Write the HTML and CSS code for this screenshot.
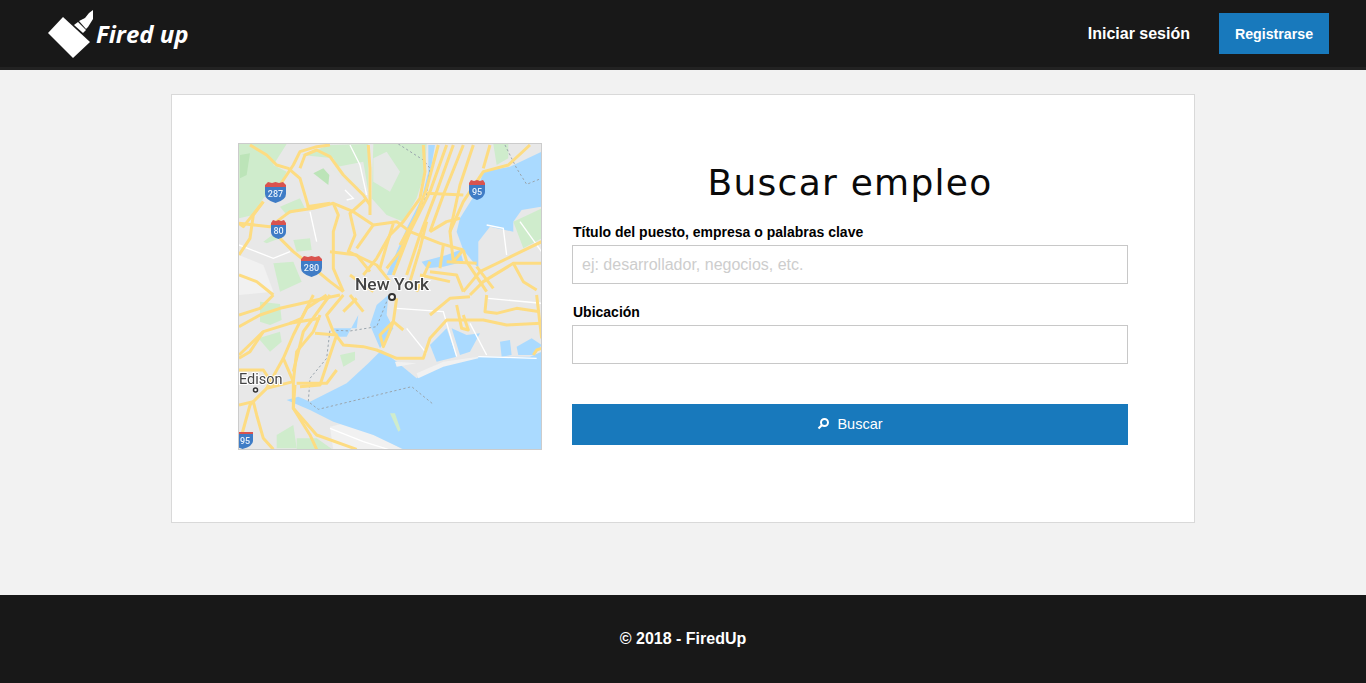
FILE: index.html
```html
<!DOCTYPE html>
<html lang="es">
<head>
  <meta charset="UTF-8" />
  <meta name="viewport" content="width=device-width, initial-scale=1.0" />
  <title>Fired up</title>
  <link rel="stylesheet" href="styles.css">
</head>
<body>

  <header class="topbar">
    <a class="logo" href="#">
      <svg class="logo-icon" width="50" height="50" viewBox="47 9 50 50">
        <polygon points="48,33 63,17 90,42 73,58" fill="#fff"/>
        <polygon points="74,25 78,22 86,30 83,33" fill="#fff"/>
        <polygon points="79,21 85,18 89,13 93,10 93,19 88,27 86,29" fill="#fff"/>
      </svg>
      <span class="logo-text">Fired up</span>
    </a>
    <nav class="topnav">
      <a class="login" href="#">Iniciar sesión</a>
      <a class="signup" href="#">Registrarse</a>
    </nav>
  </header>

  <main class="content">
    <section class="card">

      <!-- Map drawn in 3x coordinates -->
      <div class="map">
        <svg width="302" height="305" viewBox="0 0 302 305">
          <rect class="land" width="302" height="305"/>

          <g transform="translate(-9 -9) scale(0.3333)">
            <!-- top half -->
            <polygon class="green" points="27,27 170,27 130,90 170,110 150,150 100,190 70,240 27,250"/>
            <polygon class="green2" points="30,60 60,55 50,120 30,130"/>
            <polygon class="green" points="215,60 300,30 415,27 415,170 350,140 310,70"/>
            <polygon class="lightgrey" points="300,100 400,80 415,170 350,140"/>
            <polygon class="green" points="430,27 590,27 585,110 560,190 520,260 470,240 425,190"/>
            <polygon class="lightgrey" points="430,70 470,50 510,110 480,170 430,140"/>
            <polygon class="green" points="150,215 210,190 225,220 170,240"/>
            <polygon class="green" points="100,320 140,290 150,310 110,325"/>
            <polygon class="green" points="190,315 240,310 245,345 200,350"/>
            <polygon class="green2" points="250,115 280,100 298,120 295,150"/>
            <polygon class="green" points="790,27 835,27 835,70 800,90"/>
            <polygon class="green" points="850,260 935,220 935,310 880,340"/>
            <polygon class="green" points="130,385 190,380 215,440 150,470"/>
            <polygon class="lightland" points="27,360 100,390 130,470 27,480"/>
            <polygon class="water" points="840,95 935,50 935,215 875,225 850,260 850,290 780,275 745,320 745,400 700,345 680,290 690,250 740,170 760,110"/>
            <polygon class="water" points="595,30 615,30 595,150 545,280 485,420 470,420 530,280 575,190 595,110"/>
            <polygon class="water" points="575,380 650,360 690,345 700,380 640,395 590,400"/>
            <g class="minor">
              <polyline points="345,165 370,190 350,195"/>
              <polyline points="360,30 390,90 410,180"/>
              <polyline points="27,330 130,370 180,350"/>
              <polyline points="240,230 260,320"/>
              <polyline points="770,270 820,280 830,360"/>
              <polyline points="870,260 935,350"/>
            </g>
            <polyline class="border" points="505,27 580,75 600,100 590,180 545,280"/>
            <polyline class="border" points="825,30 860,100 890,148 935,130"/>
            <g class="road">
              <polyline points="60,30 110,60 140,90 175,100 210,130 235,215"/>
              <polyline points="150,150 190,90 210,50 260,35 300,30"/>
              <polyline points="210,100 225,60 260,45 300,65 340,120 400,180 420,210"/>
              <polyline points="415,30 420,100 420,240"/>
              <polyline points="27,265 120,275 180,230 250,220 310,205 370,230 430,270 500,260 540,290 630,325 700,345"/>
              <polyline points="100,200 70,240 60,310 27,360"/>
              <polyline points="310,205 325,240 310,290 310,400 340,470"/>
              <polyline points="410,190 360,235 375,300 355,350 440,390 480,440"/>
              <polyline points="150,310 190,350 240,390 300,440 340,470"/>
              <polyline points="580,30 585,110 570,190 520,260 480,300 440,370 400,420"/>
              <polyline points="650,30 600,170 540,290 490,420"/>
              <polyline points="625,30 590,160 560,240 510,330"/>
              <polyline points="670,30 620,170 570,300 530,420"/>
              <polyline points="700,30 640,180 600,290"/>
              <polyline points="730,30 690,150 660,290 670,380 700,345"/>
              <polyline points="900,30 835,90 760,110 700,200 660,290"/>
              <polyline points="780,30 760,100"/>
              <polyline points="590,175 700,180"/>
              <polyline points="935,320 750,410 700,470"/>
              <polyline points="935,385 850,385 760,440 720,480"/>
              <polyline points="700,345 710,380 770,470"/>
              <polyline points="650,380 740,385"/>
              <polyline points="600,410 680,420 700,470"/>
              <polyline points="850,385 880,440 920,465"/>
              <polyline points="430,270 380,340"/>
              <polyline points="490,265 470,330 450,400"/>
              <polyline points="590,260 570,340 540,440"/>
              <polyline points="27,265 40,275 100,200"/>
              <polyline points="600,380 560,470"/>
              <polyline points="640,330 630,400"/>
              <polyline points="360,420 430,470"/>
              <polyline points="300,350 380,360 420,410"/>
              <polyline points="27,420 80,440 130,480"/>
              <polyline points="570,420 660,440"/>
              <polyline points="740,395 790,460"/>
              <polyline points="600,290 650,260 690,250"/>
              <polyline points="540,290 510,350 470,400"/>
              <polyline points="230,215 300,205"/>
            </g>
          </g>

          <g transform="translate(-9 151) scale(0.3333)">
            <!-- bottom half -->
            <polygon class="green" points="90,20 150,27 155,75 120,90 90,80"/>
            <polygon class="green" points="85,130 150,110 155,140 120,170"/>
            <polygon class="green" points="330,180 375,170 375,195 340,215"/>
            <polygon class="green" points="140,420 190,390 200,460 140,460"/>
            <polygon class="green" points="200,430 260,430 310,465 200,465"/>
            <polygon class="lightland" points="300,395 360,380 460,430 520,465 310,465"/>
            <polygon class="water" points="455,165 415,205 350,265 240,320 205,305 170,315 240,345 310,380 430,420 520,463 935,463 935,170 900,185 750,185 620,210 560,250 500,200"/>
            <polygon class="water" points="420,90 440,30 475,0 470,60 490,100 450,160"/>
            <polygon class="water" points="310,100 380,100 385,60 350,125 325,125"/>
            <polygon class="water" points="600,150 650,100 680,185 620,200"/>
            <polygon class="water" points="665,100 710,120 750,115 720,170 690,180"/>
            <polygon class="water" points="810,140 840,135 845,180 815,185"/>
            <polygon class="water" points="860,155 905,130 935,150 915,180 865,180"/>
            <polygon class="lightland" points="560,235 640,200 745,185 745,190 640,215 565,250"/>
            <polygon class="lightland" points="495,200 560,205 500,215"/>
            <polygon class="green" points="480,355 495,355 512,405 505,410"/>
            <g class="minor">
              <polyline points="500,40 640,50 680,185"/>
              <polyline points="530,100 590,175"/>
              <polyline points="720,85 770,180"/>
              <polyline points="745,185 920,190"/>
              <polyline points="775,10 935,25"/>
              <polyline points="300,400 400,440 480,465"/>
            </g>
            <polyline class="border" points="470,20 440,95 360,108 300,105 290,190 240,250 235,320 265,343 545,275 610,328"/>
            <g class="road">
              <polyline points="27,95 90,60 150,40 260,15 330,0"/>
              <polyline points="27,180 100,110 180,85 270,70"/>
              <polyline points="290,0 230,40 190,120 160,190 190,260 190,340 260,420 380,463"/>
              <polyline points="340,0 290,60 310,110 340,150 400,155 440,165 500,190 580,190 600,130 650,75 760,75 830,90 935,85"/>
              <polyline points="255,115 320,120 270,270 210,275"/>
              <polyline points="270,60 250,110 200,170 190,260 110,280 60,330 27,450"/>
              <polyline points="300,0 220,110 190,230"/>
              <polyline points="320,225 290,265 200,265"/>
              <polyline points="27,225 100,225 130,270"/>
              <polyline points="27,330 70,320 80,360 100,430 130,463"/>
              <polyline points="195,270 190,340 240,420 260,463"/>
              <polyline points="500,10 490,80 450,120 460,155 475,120 490,80 520,105"/>
              <polyline points="600,60 660,10 720,5"/>
              <polyline points="680,30 695,100 715,105 700,60"/>
              <polyline points="770,0 765,50 800,55 860,40 930,50"/>
              <polyline points="920,0 935,130"/>
              <polyline points="360,0 400,50"/>
              <polyline points="910,180 920,165 935,160"/>
              <polyline points="250,0 215,70 180,85"/>
              <polyline points="130,0 90,40 27,60"/>
              <polyline points="380,10 340,50"/>
              <polyline points="100,110 60,170 27,190"/>
              <polyline points="160,190 110,280"/>
            </g>
          </g>

          <!-- shields -->
          <g class="shield" transform="translate(26 38)">
            <path class="shield-top" d="M0 3L3 0L7 1L10.500 0L14 1L18 0L21 3V5H0Z"/>
            <path class="shield-blue" d="M0 5H21V12Q21 18 10.500 21Q0 18 0 12Z"/>
            <text x="10.500" y="15">287</text>
          </g>
          <g class="shield" transform="translate(32 76)">
            <path class="shield-top" d="M0 3L2 0L5 1L7.500 0L10 1L13 0L15 3V5H0Z"/>
            <path class="shield-blue" d="M0 5H15V12Q15 17 7.500 19Q0 17 0 12Z"/>
            <text x="7.500" y="14">80</text>
          </g>
          <g class="shield" transform="translate(62 112)">
            <path class="shield-top" d="M0 3L3 0L7 1L10.500 0L14 1L18 0L21 3V5H0Z"/>
            <path class="shield-blue" d="M0 5H21V12Q21 18 10.500 21Q0 18 0 12Z"/>
            <text x="10.500" y="15">280</text>
          </g>
          <g class="shield" transform="translate(230 36)">
            <path class="shield-top" d="M0 3L2 0L5 1L8 0L11 1L14 0L16 3V5H0Z"/>
            <path class="shield-blue" d="M0 5H16V12Q16 17 8 20Q0 17 0 12Z"/>
            <text x="8" y="15">95</text>
          </g>
          <g class="shield" transform="translate(-7 285)">
            <path class="shield-top" d="M0 3H21V5H0Z"/>
            <path class="shield-blue" d="M0 5H21V12Q21 17 10.500 20Q0 17 0 12Z"/>
            <text x="13" y="15">95</text>
          </g>

          <text class="city" x="116" y="146">New York</text>
          <circle class="dot" cx="153" cy="153" r="3"/>
          <text class="town" x="0" y="240">Edison</text>
          <circle class="dot small" cx="16.500" cy="246" r="2"/>
        </svg>
      </div>

      <form class="search-form">
        <h1>Buscar empleo</h1>
        <label class="first" for="puesto">Título del puesto, empresa o palabras clave</label>
        <input type="text" id="puesto" placeholder="ej: desarrollador, negocios, etc.">
        <label for="ubicacion">Ubicación</label>
        <input type="text" id="ubicacion">
        <button type="submit">
          <svg width="13" height="13" viewBox="0 0 13 13">
            <circle cx="7.500" cy="5.500" r="3.500" fill="none" stroke="#fff" stroke-width="2"/>
            <line x1="5" y1="8" x2="1.500" y2="11.500" stroke="#fff" stroke-width="2.200"/>
          </svg>
          Buscar
        </button>
      </form>

    </section>
  </main>

  <footer class="footer">© 2018 - FiredUp</footer>

</body>
</html>
```

FILE: styles.css
```css
body {
  margin: 0;
  background-color: #f2f2f2;
  font-family: "Liberation Sans", Arial, sans-serif;
  height: 683px;
  overflow: hidden;
  display: flex;
  flex-direction: column;
}
a {
  text-decoration: none;
  color: white;
}

/* Top bar */
.topbar {
  height: 67px;
  background-color: #181818;
  border-bottom: 3px solid #222;
  display: flex;
  justify-content: space-between;
  align-items: center;
  padding: 0 37px 0 47px;
}
.logo {
  display: flex;
  align-items: center;
  margin-top: -1px;
}
.logo-icon {
  margin-top: 1px;
}
.logo-text {
  font-family: "Open Sans", sans-serif;
  font-style: italic;
  font-weight: 700;
  font-size: 24px;
  margin-left: -1px;
}
.topnav {
  display: flex;
  align-items: center;
  gap: 29px;
}
.login {
  font-size: 16px;
  font-weight: bold;
}
.signup {
  background-color: #1879bc;
  width: 110px;
  height: 41px;
  line-height: 42px;
  text-align: center;
  font-size: 14.200px;
  font-weight: bold;
}

/* Card */
.content {
  flex: 1;
  display: flex;
  justify-content: center;
  padding-top: 24px;
}
.card {
  box-sizing: border-box;
  width: 1024px;
  height: 429px;
  background-color: white;
  border: 1px solid #d9d9d9;
  padding: 48px 66px;
  display: flex;
  gap: 30px;
}
.map {
  width: 302px;
  height: 305px;
  border: 1px solid #ccc;
  flex-shrink: 0;
  overflow: hidden;
}
.map svg {
  display: block;
  filter: blur(0.4px);
}
.land { fill: #e8e8e8; }
.lightland { fill: #f1f1f1; }
.lightgrey { fill: #e6e9e6; }
.green { fill: #cfeccc; }
.green2 { fill: #bce4b8; }
.water { fill: #aadaff; }
.minor polyline {
  fill: none;
  stroke: #fff;
  stroke-width: 4;
}
.road polyline {
  fill: none;
  stroke: #fddc82;
  stroke-width: 9;
  stroke-linejoin: round;
}
.border {
  fill: none;
  stroke: #9aa5ad;
  stroke-width: 3;
  stroke-dasharray: 7 7;
}
.shield-top { fill: #d9534f; }
.shield-blue { fill: #3f7cc6; }
.shield text {
  fill: #e6f0fb;
  font-family: Roboto, sans-serif;
  font-size: 9px;
  font-weight: 500;
  text-anchor: middle;
}
.city, .town {
  font-family: Roboto, sans-serif;
  fill: #444;
  stroke: #fff;
  stroke-width: 2px;
  paint-order: stroke;
}
.city {
  font-size: 17.400px;
  font-weight: 500;
}
.town {
  font-size: 14.500px;
}
.dot {
  fill: #fff;
  stroke: #333;
  stroke-width: 2;
}
.dot.small {
  stroke-width: 1.500;
}

/* Search form */
.search-form {
  width: 556px;
  display: flex;
  flex-direction: column;
}
h1 {
  font-family: "DejaVu Sans", sans-serif;
  font-weight: normal;
  font-size: 36px;
  line-height: 46px;
  letter-spacing: 1.250px;
  text-align: center;
  color: #0a0a0a;
  margin: 17px 0 0;
}
label {
  font-size: 14px;
  font-weight: bold;
  line-height: 16px;
  color: #000;
  margin: 20px 0 5px 1px;
}
label.first {
  margin: 18px 0 5px 1px;
}
input {
  box-sizing: border-box;
  height: 39px;
  width: 556px;
  border: 1px solid #c8c8c8;
  padding: 0 9px;
  font-family: "Liberation Sans", Arial, sans-serif;
  font-size: 16px;
  outline: none;
}
input::placeholder {
  color: #cdcdcd;
}
button {
  height: 41px;
  margin-top: 40px;
  padding: 0 0 2px;
  background-color: #1879bc;
  color: white;
  border: none;
  font-family: "Liberation Sans", Arial, sans-serif;
  font-size: 14.500px;
  display: flex;
  justify-content: center;
  align-items: center;
  gap: 7px;
}

/* Footer */
.footer {
  height: 88px;
  background-color: #181818;
  color: white;
  font-size: 16px;
  font-weight: bold;
  line-height: 87px;
  text-align: center;
}
```
